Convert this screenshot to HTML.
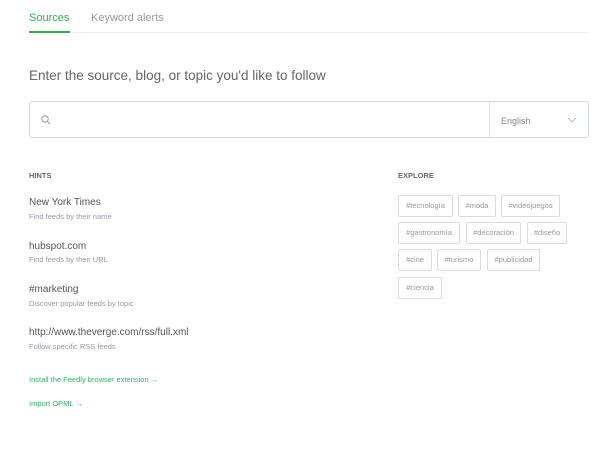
<!DOCTYPE html>
<html><head><style>
body{margin:0;width:600px;height:452px;background:#fff;font-family:"Liberation Sans",sans-serif;position:relative;overflow:hidden}
.a{position:absolute;white-space:nowrap}
.tag{position:absolute;border:1px solid #dcdcdc;border-radius:2px;font-size:7.5px;color:#999;line-height:20px;text-align:center;box-sizing:border-box;height:22px}
.t{font-size:10px;color:#555}
.s{font-size:7.5px;color:#9a98a8}
.l{font-size:7.5px;color:#2bb26a}
</style></head><body>
<div class="a" style="left:29px;top:12px;font-size:11px;color:#2bb24c">Sources</div>
<div class="a" style="left:29px;top:31px;width:41px;height:2px;background:#2bb24c"></div>
<div class="a" style="left:91px;top:12px;font-size:11px;color:#999">Keyword alerts</div>
<div class="a" style="left:70px;top:32px;width:518px;height:1px;background:#eee"></div>
<div class="a" style="left:29px;top:68px;font-size:13.5px;color:#666">Enter the source, blog, or topic you'd like to follow</div>
<div class="a" style="left:29px;top:101px;width:560px;height:37px;border:1px solid #cfd8d4;border-radius:3px;box-sizing:border-box"></div>
<div class="a" style="left:489px;top:102px;width:1px;height:35px;background:#dde"></div>
<svg class="a" style="left:41px;top:115px" width="10" height="10"><circle cx="4" cy="4" r="3.2" fill="none" stroke="#999" stroke-width="1"/><path d="M6.4 6.4L9 9" stroke="#999" stroke-width="1"/></svg>
<div class="a" style="left:501px;top:116px;font-size:9px;color:#888">English</div>
<svg class="a" style="left:567px;top:117px" width="10" height="6"><path d="M1 1L5 5L9 1" fill="none" stroke="#aaa" stroke-width="0.8"/></svg>
<div class="a" style="left:29px;top:171px;font-size:7.5px;font-weight:bold;color:#666">HINTS</div>
<div class="a t" style="left:29px;top:197px">New York Times</div>
<div class="a s" style="left:29px;top:212px">Find feeds by their name</div>
<div class="a t" style="left:29px;top:241px">hubspot.com</div>
<div class="a s" style="left:29px;top:255px">Find feeds by their URL</div>
<div class="a t" style="left:29px;top:284px">#marketing</div>
<div class="a s" style="left:29px;top:299px">Discover popular feeds by topic</div>
<div class="a t" style="left:29px;top:327px">http://www.theverge.com/rss/full.xml</div>
<div class="a s" style="left:29px;top:342px">Follow specific RSS feeds</div>
<div class="a l" style="left:29px;top:375px">Install the Feedly browser extension →</div>
<div class="a l" style="left:29px;top:399px">Import OPML →</div>
<div class="a" style="left:398px;top:171px;font-size:7.5px;font-weight:bold;color:#666">EXPLORE</div>
<div class="tag" style="left:398px;top:195px;width:55px">#tecnología</div>
<div class="tag" style="left:458px;top:195px;width:38px">#moda</div>
<div class="tag" style="left:501px;top:195px;width:59px">#videojuegos</div>
<div class="tag" style="left:398px;top:222px;width:62px">#gastronomía</div>
<div class="tag" style="left:466px;top:222px;width:55px">#decoración</div>
<div class="tag" style="left:527px;top:222px;width:40px">#diseño</div>
<div class="tag" style="left:398px;top:249px;width:34px">#cine</div>
<div class="tag" style="left:437px;top:249px;width:44px">#turismo</div>
<div class="tag" style="left:487px;top:249px;width:53px">#publicidad</div>
<div class="tag" style="left:398px;top:277px;width:44px">#ciencia</div>
</body></html>
